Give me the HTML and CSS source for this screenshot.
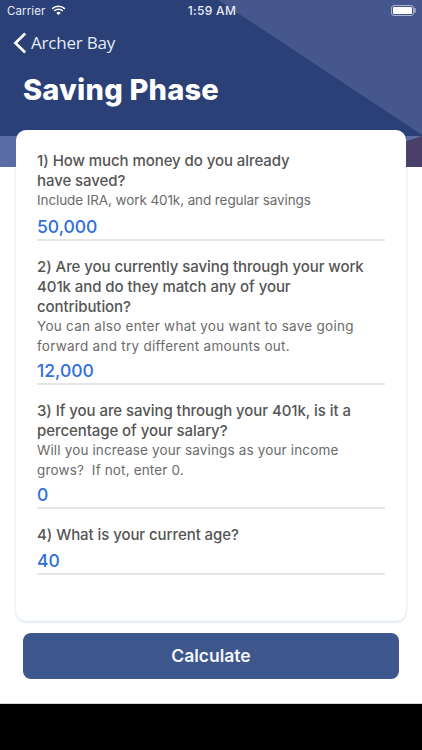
FILE: index.html
```html
<!DOCTYPE html>
<html lang="en">
<head>
<meta charset="utf-8">
<title>Saving Phase</title>
<link rel="stylesheet" href="styles.css">
</head>
<body>
<div class="screen">
  <div class="hero">
    <svg class="hero-bg" viewBox="0 0 422 167" preserveAspectRatio="none" aria-hidden="true">
      <rect width="422" height="167" fill="#2a4077"/>
      <polygon points="218,0 422,0 422,135" fill="#45578c"/>
      <rect y="136" width="422" height="31" fill="#5a6ca6"/>
      <polygon points="404,167 404,142 422,136 422,167" fill="#493f68"/>
    </svg>
    <div class="status">
      <span class="carrier">Carrier
        <svg class="wifi" viewBox="0 0 16 12" aria-hidden="true">
          <path d="M1 4.2a10 10 0 0 1 14 0M3.4 6.6a6.6 6.6 0 0 1 9.2 0" fill="none" stroke="#fff" stroke-width="1.7"/>
          <path d="M5.6 8.6a3.4 3.4 0 0 1 4.8 0L8 11z" fill="#fff"/>
        </svg>
      </span>
      <span class="time">1:59 AM</span>
      <span class="battery"><span class="battery-fill"></span><span class="battery-nub"></span></span>
    </div>
    <div class="nav">
      <svg class="chevron" viewBox="0 0 14 22" aria-hidden="true"><path d="M12.2 1.5 2.4 11l9.8 9.5" fill="none" stroke="#fff" stroke-width="2.7"/></svg>
      <span>Archer Bay</span>
    </div>
    <h1>Saving Phase</h1>
  </div>
  <main class="card">
    <section class="field q1">
      <h2>1) How much money do you already<br>have saved?</h2>
      <p>Include IRA, work 401k, and regular savings</p>
      <div class="value">50,000</div>
    </section>
    <section class="field q2">
      <h2>2) Are you currently saving through your work 401k and do they match any of your contribution?</h2>
      <p>You can also enter what you want to save going forward and try different amounts out.</p>
      <div class="value">12,000</div>
    </section>
    <section class="field q3">
      <h2>3) If you are saving through your 401k, is it a percentage of your salary?</h2>
      <p>Will you increase your savings as your income grows?&nbsp; If not, enter 0.</p>
      <div class="value">0</div>
    </section>
    <section class="field">
      <h2>4) What is your current age?</h2>
      <div class="value">40</div>
    </section>
  </main>
  <button class="calc" type="button">Calculate</button>
</div>
<div class="bottom-bar"></div>
</body>
</html>
```
FILE: styles.css
```css
* { box-sizing: border-box; }
html, body { margin: 0; padding: 0; }
body {
  width: 422px;
  height: 750px;
  overflow: hidden;
  background: #000;
  font-family: "Inter", "Liberation Sans", sans-serif;
  display: flex;
  flex-direction: column;
}
.screen {
  height: 704px;
  background: #fff;
  position: relative;
  display: flex;
  flex-direction: column;
  border-bottom: 1px solid #d8d8d8;
}
.hero {
  height: 167px;
  position: relative;
  color: #fff;
  flex: none;
}
.hero-bg {
  position: absolute;
  inset: 0;
  width: 100%;
  height: 100%;
}
.status {
  position: relative;
  height: 21px;
  display: grid;
  grid-template-columns: 1fr auto 1fr;
  align-items: center;
  padding: 0 5px 0 7px;
  color: #e9ecf4;
}
.carrier {
  display: flex;
  align-items: center;
  gap: 6px;
  font-size: 11.5px;
  letter-spacing: 0.1px;
}
.wifi { width: 15px; height: 11px; }
.time {
  font-size: 12px;
  font-weight: 500;
  letter-spacing: 0.3px;
}
.battery {
  position: relative;
  justify-self: end;
  width: 23px;
  height: 11px;
  border: 1px solid #aab3cd;
  border-radius: 3px;
  padding: 1px;
  display: flex;
  margin-right: 3px;
}
.battery-fill {
  flex: 1;
  background: #fff;
  border-radius: 1px;
}
.battery-nub {
  position: absolute;
  right: -3px;
  top: 2px;
  width: 2px;
  height: 5px;
  background: #8f9abd;
  border-radius: 0 1px 1px 0;
}
.nav {
  position: relative;
  display: flex;
  align-items: center;
  gap: 4px;
  padding: 10px 0 0 13px;
  font-family: "Open Sans", sans-serif;
  font-size: 17px;
  letter-spacing: -0.2px;
  color: #e8ebf3;
}
.chevron { width: 14px; height: 22px; }
h1 {
  position: relative;
  margin: 17px 0 0 23px;
  font-size: 29px;
  font-weight: 800;
  line-height: 38px;
  letter-spacing: 0.2px;
  color: #fff;
}
.card {
  position: relative;
  margin: -37px 16px 0;
  height: 491px;
  flex: none;
  background: #fff;
  border-radius: 10px;
  padding: 20px 21px 0;
  box-shadow: 0 1px 3px rgba(90, 120, 200, 0.28);
}
.field { margin-bottom: 15px; }
h2 {
  margin: 0;
  padding-top: 1px;
  font-size: 15px;
  font-weight: 500;
  line-height: 20px;
  letter-spacing: -0.07px;
  color: #555;
}
.field p {
  margin: -1px 0 0;
  font-size: 13.5px;
  font-weight: 400;
  line-height: 20px;
  color: #6b6b6b;
}
.q1 p { letter-spacing: -0.1px; }
.q2 p { letter-spacing: 0.27px; }
.q3 p { letter-spacing: 0.15px; }
.value {
  margin-top: 3px;
  height: 28px;
  font-size: 17.5px;
  font-weight: 500;
  line-height: 27px;
  color: #2f6fdc;
  border-bottom: 2px solid #e6e6e8;
}
.q2 .value, .q3 .value { margin-top: 1px; }
.field:last-child .value { margin-top: 2px; }
.calc {
  margin: 12px 23px 0;
  padding: 0 0 2px;
  height: 46px;
  flex: none;
  border: 0;
  border-radius: 8px;
  background: #3d578c;
  color: #f3f5f9;
  font-family: "Inter", "Liberation Sans", sans-serif;
  font-size: 17.5px;
  font-weight: 600;
}
.bottom-bar { flex: 1; background: #000; }
```
